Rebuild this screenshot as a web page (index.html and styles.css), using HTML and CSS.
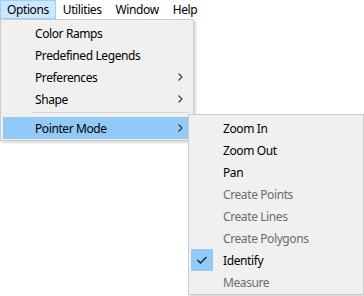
FILE: index.html
```html
<!DOCTYPE html>
<html>
<head>
<meta charset="utf-8">
<link rel="stylesheet" href="styles.css">
</head>
<body>
<div class="menubar">
  <div class="top-item active">Options</div>
  <div class="top-item">Utilities</div>
  <div class="top-item">Window</div>
  <div class="top-item">Help</div>
</div>

<div class="menu main-menu">
  <div class="row"><span class="gutter"></span><span class="label">Color Ramps</span></div>
  <div class="row"><span class="gutter"></span><span class="label">Predefined Legends</span></div>
  <div class="row"><span class="gutter"></span><span class="label">Preferences</span><span class="arrow"><svg width="5" height="8" viewBox="0 0 5 8"><path d="M0.5 0.5 L4 4 L0.5 7.5" fill="none" stroke="#333" stroke-width="1.1"/></svg></span></div>
  <div class="row"><span class="gutter"></span><span class="label">Shape</span><span class="arrow"><svg width="5" height="8" viewBox="0 0 5 8"><path d="M0.5 0.5 L4 4 L0.5 7.5" fill="none" stroke="#333" stroke-width="1.1"/></svg></span></div>
  <div class="sep"></div>
  <div class="row hover"><span class="gutter"></span><span class="label">Pointer Mode</span><span class="arrow"><svg width="5" height="8" viewBox="0 0 5 8"><path d="M0.5 0.5 L4 4 L0.5 7.5" fill="none" stroke="#333" stroke-width="1.1"/></svg></span></div>
</div>

<div class="menu sub-menu">
  <div class="row"><span class="gutter"></span><span class="label">Zoom In</span></div>
  <div class="row"><span class="gutter"></span><span class="label">Zoom Out</span></div>
  <div class="row"><span class="gutter"></span><span class="label">Pan</span></div>
  <div class="row disabled"><span class="gutter"></span><span class="label">Create Points</span></div>
  <div class="row disabled"><span class="gutter"></span><span class="label">Create Lines</span></div>
  <div class="row disabled"><span class="gutter"></span><span class="label">Create Polygons</span></div>
  <div class="row"><span class="gutter"><span class="check"><svg width="12" height="10" viewBox="0 0 12 10"><path d="M1.5 5 L4.5 8 L10.5 2" fill="none" stroke="#222" stroke-width="1.4"/></svg></span></span><span class="label">Identify</span></div>
  <div class="row disabled"><span class="gutter"></span><span class="label">Measure</span></div>
</div>
</body>
</html>
```

FILE: styles.css
```css
html, body {
  margin: 0;
  padding: 0;
  background: #ffffff;
  width: 364px;
  height: 296px;
  overflow: hidden;
  font-family: "Noto Sans", "Open Sans", sans-serif;
  font-size: 12px;
  letter-spacing: -0.4px;
  color: #000;
}

.menubar {
  display: flex;
  height: 19px;
  align-items: stretch;
}

.top-item {
  padding: 0 6px;
  border: 1px solid transparent;
  line-height: 17px;
  white-space: nowrap;
}

.top-item.active {
  background: #cce8ff;
  border-color: #99d1ff;
}

.menu {
  position: absolute;
  box-sizing: border-box;
  background: #f0f0f0;
  border: 1px solid #cccccc;
  box-shadow: 2px 2px 2px rgba(0, 0, 0, 0.15);
}

.main-menu {
  left: 0;
  top: 19px;
  width: 194px;
  padding: 2px 4px 1px 2px;
}

.sub-menu {
  left: 188px;
  top: 114px;
  width: 176px;
  padding: 2px 2px 1px 2px;
}

.row {
  display: flex;
  align-items: center;
  height: 22px;
  white-space: nowrap;
}

.row.hover {
  background: #91c9f7;
}

.gutter {
  width: 32px;
  flex: none;
  height: 22px;
  display: flex;
  align-items: center;
}

.label {
  flex: 1;
}

.arrow {
  width: 11px;
  flex: none;
  display: flex;
  align-items: center;
}

.disabled {
  color: #6d6d6d;
}

.check {
  width: 22px;
  height: 22px;
  background: #91c9f7;
  display: flex;
  align-items: center;
  justify-content: center;
}

.sep {
  height: 1px;
  background: #d7d7d7;
  margin: 2px 0 4px 29px;
}
```
